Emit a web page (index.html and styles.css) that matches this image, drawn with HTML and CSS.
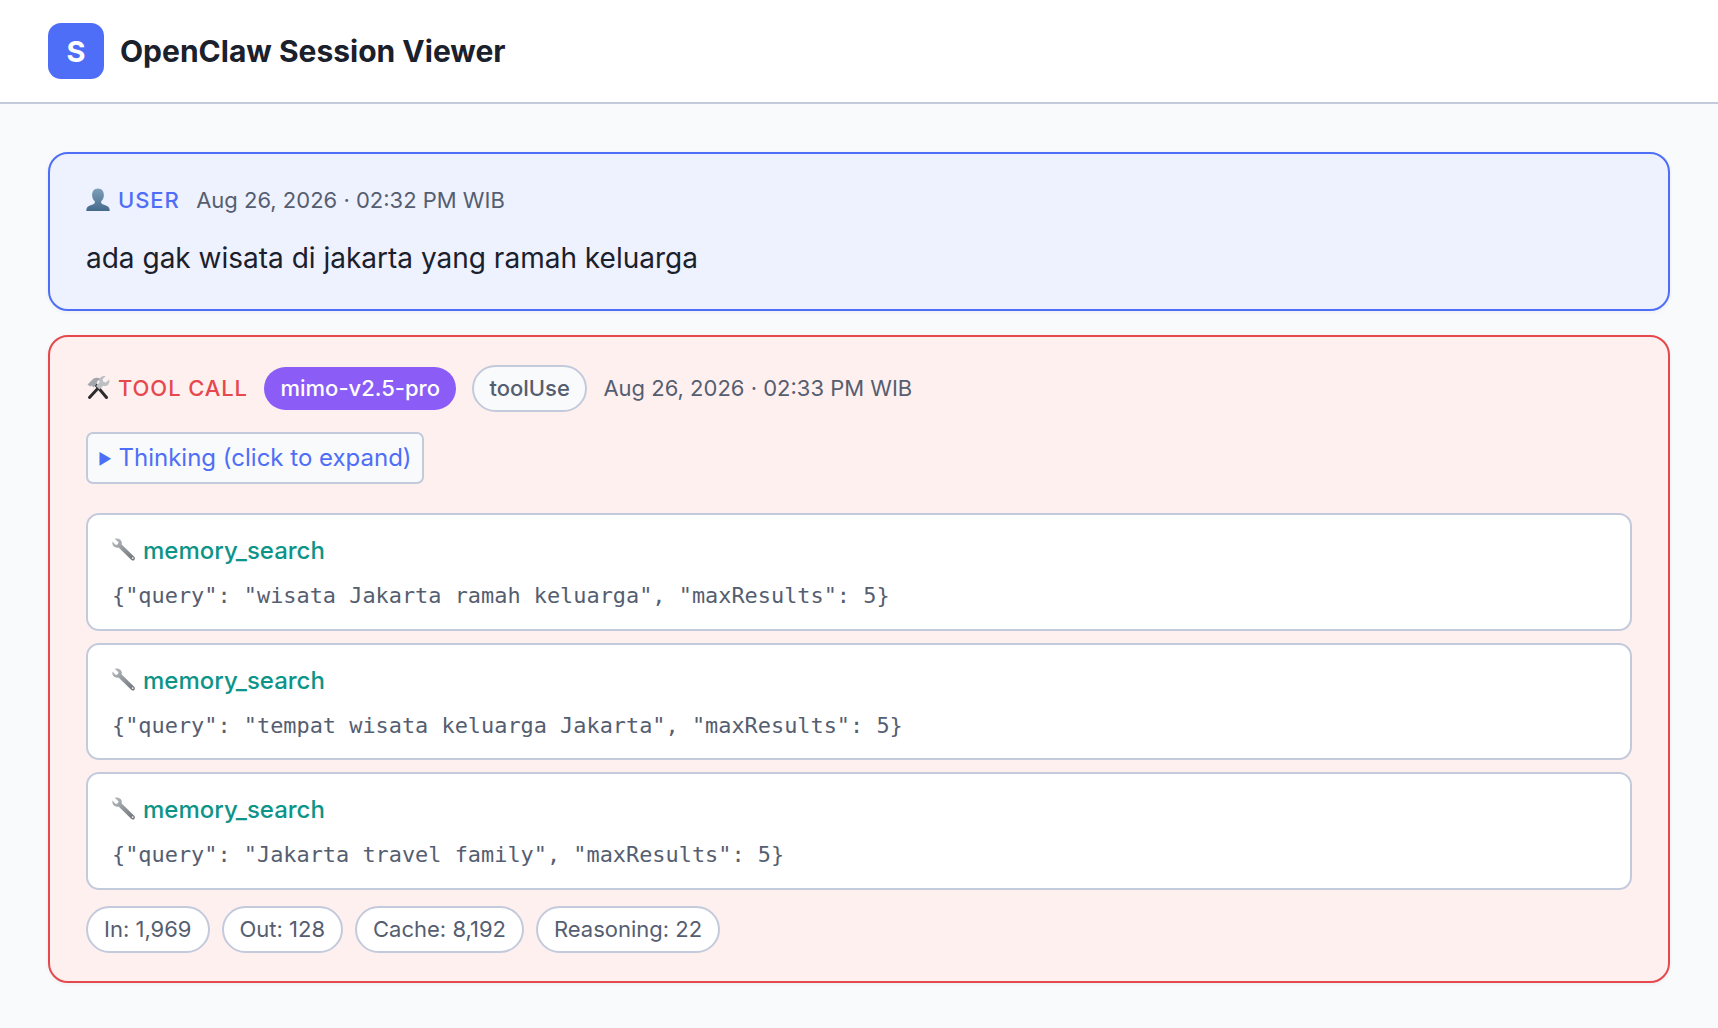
FILE: index.html
```html
<!DOCTYPE html>
<html lang="en">
<head>
    <meta charset="UTF-8">
    <meta name="viewport" content="width=device-width, initial-scale=1.0">
    <title>OpenClaw Session Viewer</title>
    <link rel="stylesheet" href="styles.css">
</head>
<body>
    <svg class="sprite" aria-hidden="true">
        <defs>
            <linearGradient id="steel" x1="0" y1="0" x2="1" y2="1">
                <stop offset="0" stop-color="#b9bdc2"/>
                <stop offset="1" stop-color="#6d7278"/>
            </linearGradient>
            <linearGradient id="bust" x1="0" y1="0" x2="0" y2="1">
                <stop offset="0" stop-color="#7f9fb8"/>
                <stop offset="1" stop-color="#446a8c"/>
            </linearGradient>
            <g id="wrench">
                <path fill="url(#steel)" d="M2.600 1.800l3.900 3.400-.6 2.100-2.100.6L.5 4.500C0 6.500.5 8.400 1.900 9.600c1.300 1.100 3 1.400 4.600.9l12.700 12.300c.9.9 2.300.9 3.100.1.900-.9.800-2.300-.1-3.100L9.700 7.400c.4-1.700-.1-3.500-1.400-4.600-1.500-1.300-3.700-1.700-5.700-1z"/>
                <circle cx="20.700" cy="21.100" r=".9" fill="#f4f4f4"/>
            </g>
        </defs>
    </svg>

    <header class="topbar">
        <div class="logo">S</div>
        <h1>OpenClaw Session Viewer</h1>
    </header>

    <main class="messages">
        <section class="card card-user">
            <div class="meta">
                <span class="role role-user">
                    <svg class="emoji" viewBox="1 1 22 22">
                        <path fill="url(#bust)" d="M12 1.500c-3.400 0-5.400 2.600-5.400 5.900 0 2.400.9 4.400 2.300 5.600.3.300.3 1.600-.2 2.200-1 1.100-4.900 1.700-6.500 3.400-.7.800-.9 2.200-.9 3.400h21.400c0-1.200-.2-2.600-.9-3.400-1.600-1.700-5.500-2.300-6.500-3.400-.5-.6-.5-1.900-.2-2.200 1.400-1.200 2.300-3.200 2.300-5.600 0-3.300-2-5.900-5.400-5.900z"/>
                    </svg>
                    USER
                </span>
                <span class="time">Aug 26, 2026 · 02:32 PM WIB</span>
            </div>
            <p class="text">ada gak wisata di jakarta yang ramah keluarga</p>
        </section>

        <section class="card card-tool">
            <div class="meta">
                <span class="role role-tool">
                    <svg class="emoji" viewBox="0 0 24 24">
                        <path stroke="#2b2b2e" stroke-width="3" stroke-linecap="round" d="M10 9l10.500 12.500"/>
                        <path stroke="#2b2b2e" stroke-width="3" stroke-linecap="round" d="M15 9L3.500 21.500"/>
                        <path fill="#a3a7ad" d="M1.500 8.500L7.500 2.500c2.800-1.200 5.600-.9 8 1l-.5.800c-1.600-.4-3-.1-3.800.9-.4.700-.3 1.300.1 1.900l-3.700 4.400-2-1.900-1.400 1z"/>
                        <path fill="#bcc0c5" d="M23 3.500l-3.200 3-2.500-.7-.7-2.500 3-3c-2.600-.9-5.600.5-6.200 3.300-.2 1-.1 1.900.2 2.600L10 10l3.500 3.500 3.700-3.800c.8.300 1.700.400 2.600.2 2.800-.6 4.400-3.700 3.200-6.400z"/>
                    </svg>
                    TOOL CALL
                </span>
                <span class="pill pill-model">mimo-v2.5-pro</span>
                <span class="pill pill-stop">toolUse</span>
                <span class="time">Aug 26, 2026 · 02:33 PM WIB</span>
            </div>

            <div class="thinking"><span class="caret">▶</span> Thinking (click to expand)</div>

            <div class="calls">
                <div class="call">
                    <div class="call-name">
                        <svg class="emoji" viewBox="0 0 24 24"><use href="#wrench"/></svg>
                        memory_search
                    </div>
                    <code class="call-args">{"query": "wisata Jakarta ramah keluarga", "maxResults": 5}</code>
                </div>
                <div class="call">
                    <div class="call-name">
                        <svg class="emoji" viewBox="0 0 24 24"><use href="#wrench"/></svg>
                        memory_search
                    </div>
                    <code class="call-args">{"query": "tempat wisata keluarga Jakarta", "maxResults": 5}</code>
                </div>
                <div class="call">
                    <div class="call-name">
                        <svg class="emoji" viewBox="0 0 24 24"><use href="#wrench"/></svg>
                        memory_search
                    </div>
                    <code class="call-args">{"query": "Jakarta travel family", "maxResults": 5}</code>
                </div>
            </div>

            <div class="usage">
                <span class="stat">In: 1,969</span>
                <span class="stat">Out: 128</span>
                <span class="stat">Cache: 8,192</span>
                <span class="stat">Reasoning: 22</span>
            </div>
        </section>
    </main>
</body>
</html>
```
FILE: styles.css
```css
* {
    box-sizing: border-box;
}

body {
    margin: 0;
    font-family: Inter, 'Liberation Sans', sans-serif;
    background: #f8fafc;
    color: #1a202c;
}

.sprite {
    display: block;
    width: 0;
    height: 0;
}

.topbar {
    display: flex;
    align-items: center;
    gap: 16px;
    height: 104px;
    padding: 0 48px;
    background: #ffffff;
    border-bottom: 2px solid #c3cadb;
}

.logo {
    display: flex;
    align-items: center;
    justify-content: center;
    width: 56px;
    height: 56px;
    border-radius: 13px;
    background: #4f6ef7;
    color: #ffffff;
    font-size: 29px;
    font-weight: 700;
}

h1 {
    margin: 0;
    font-size: 30px;
    font-weight: 700;
    color: #1a202c;
}

.messages {
    display: flex;
    flex-direction: column;
    gap: 24px;
    padding: 48px 48px 46px;
}

.card {
    padding: 32px 36px 31px;
    border: 2px solid;
    border-radius: 20px;
    box-shadow: 0 1px 4px rgba(0, 0, 0, 0.06);
}

.card-user {
    background: #eef1fe;
    border-color: #4f6ef7;
}

.card-tool {
    padding-top: 28px;
    padding-bottom: 28px;
    background: #fff0f0;
    border-color: #e5484d;
}

.meta {
    display: flex;
    align-items: center;
    gap: 16.5px;
    font-size: 22px;
    line-height: 28px;
}

.role {
    display: flex;
    align-items: center;
    gap: 8px;
    font-weight: 500;
    letter-spacing: 0.9px;
}

.role-user {
    color: #4f6ef7;
}

.role-tool {
    color: #e5484d;
}

.card-tool .role,
.card-tool .time {
    margin-bottom: 2px;
}

.emoji {
    flex: none;
    width: 24px;
    height: 24px;
}

.time {
    color: #555e70;
}

.text {
    margin: 24px 0 0;
    font-size: 28px;
    line-height: 40px;
}

.pill {
    display: inline-block;
    border-radius: 24px;
    font-weight: 500;
}

.pill-model {
    padding: 0 16px;
    line-height: 43px;
    background: #8b5cf6;
    color: #ffffff;
}

.pill-stop {
    padding: 0 15px;
    line-height: 43px;
    background: #f8fafc;
    border: 2px solid #c3cadb;
    color: #555e70;
}

.thinking {
    display: inline-block;
    margin-top: 20px;
    padding: 1px 10px 0;
    border: 2px solid #c3cadb;
    border-radius: 7px;
    background: #f8fafc;
    color: #4f6ef7;
    font-size: 24px;
    line-height: 46px;
}

.caret {
    font-size: 15px;
    vertical-align: 2px;
}

.calls {
    display: flex;
    flex-direction: column;
    gap: 12px;
    margin-top: 29px;
}

.call {
    height: 117.5px;
    padding: 19px 24px 0;
    background: #ffffff;
    border: 2px solid #c3cadb;
    border-radius: 13px;
}

.call-name {
    display: flex;
    align-items: center;
    gap: 7px;
    font-size: 24px;
    font-weight: 500;
    line-height: 34px;
    color: #0d9488;
}

.call-name .emoji {
    margin-bottom: 4px;
}

.call-args {
    display: block;
    margin-top: 12px;
    font-family: 'DejaVu Sans Mono', monospace;
    font-size: 21.9px;
    line-height: 32px;
    color: #555e70;
}

.usage {
    display: flex;
    gap: 12px;
    margin-top: 16.5px;
}

.stat {
    padding: 0 16px;
    background: #ffffff;
    border: 2px solid #c3cadb;
    border-radius: 24px;
    color: #555e70;
    font-size: 22px;
    line-height: 43px;
}
```
